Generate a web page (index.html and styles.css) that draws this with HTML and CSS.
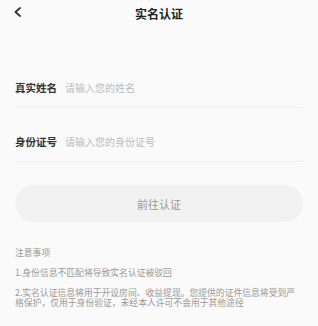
FILE: index.html
```html
<!DOCTYPE html>
<html lang="zh-CN">
<head>
  <meta charset="UTF-8">
  <meta name="viewport" content="width=device-width, initial-scale=1.0">
  <title>实名认证</title>
  <link rel="stylesheet" href="styles.css">
</head>
<body>
  <div class="navbar">
    <button class="back-btn" aria-label="返回">
      <svg width="9" height="10" viewBox="0 0 9 10"><path d="M7 1 L2.5 5 L7 9" fill="none" stroke="#333" stroke-width="1.8" stroke-linecap="round" stroke-linejoin="round"/></svg>
    </button>
    <h1>实名认证</h1>
  </div>
  <div class="form">
    <div class="field">
      <label for="real-name">真实姓名</label>
      <input id="real-name" type="text" placeholder="请输入您的姓名">
    </div>
    <div class="field">
      <label for="id-number">身份证号</label>
      <input id="id-number" type="text" placeholder="请输入您的身份证号">
    </div>
    <button class="submit-btn">前往认证</button>
  </div>
  <div class="notes">
    <p class="notes-title">注意事项</p>
    <p>1.身份信息不匹配将导致实名认证被驳回</p>
    <p>2.实名认证信息将用于开设房间、收益提现。您提供的证件信息将受到严格保护，仅用于身份验证，未经本人许可不会用于其他途径</p>
  </div>
</body>
</html>
```

FILE: styles.css
```css
body {
  font-family: "Noto Sans CJK SC", "Noto Sans", sans-serif;
  background-color: #fafafa;
  margin: 0;
  color: #333;
}
.navbar {
  position: relative;
  height: 26px;
  display: flex;
  align-items: center;
  justify-content: center;
}
.navbar h1 {
  margin: 0;
  font-size: 12px;
  font-weight: bold;
  color: #222;
}
.back-btn {
  position: absolute;
  left: 13px;
  top: 7px;
  padding: 0;
  border: none;
  background: none;
  display: flex;
}
.form {
  padding: 43px 15px 0;
}
.field {
  display: flex;
  align-items: center;
  padding: 12px 0;
  line-height: 14px;
  border-bottom: 1px solid #f0f0f0;
}
.field + .field {
  margin-top: 15px;
}
.field label {
  width: 50px;
  font-size: 10.5px;
  font-weight: bold;
  color: #333;
}
.field input {
  flex: 1;
  border: none;
  background: transparent;
  font-family: inherit;
  font-size: 10px;
  line-height: 14px;
  padding: 0;
  outline: none;
}
.field input::placeholder {
  color: #bbb;
}
.submit-btn {
  display: block;
  width: 100%;
  height: 37px;
  margin-top: 23px;
  border: none;
  border-radius: 19px;
  background-color: #f1f1f1;
  color: #999;
  font-family: inherit;
  font-size: 11px;
}
.notes {
  padding: 26px 18px 0 15px;
  font-size: 8.8px;
  color: #999;
}
.notes p {
  margin: 0 0 10px;
  line-height: 10px;
}
```
